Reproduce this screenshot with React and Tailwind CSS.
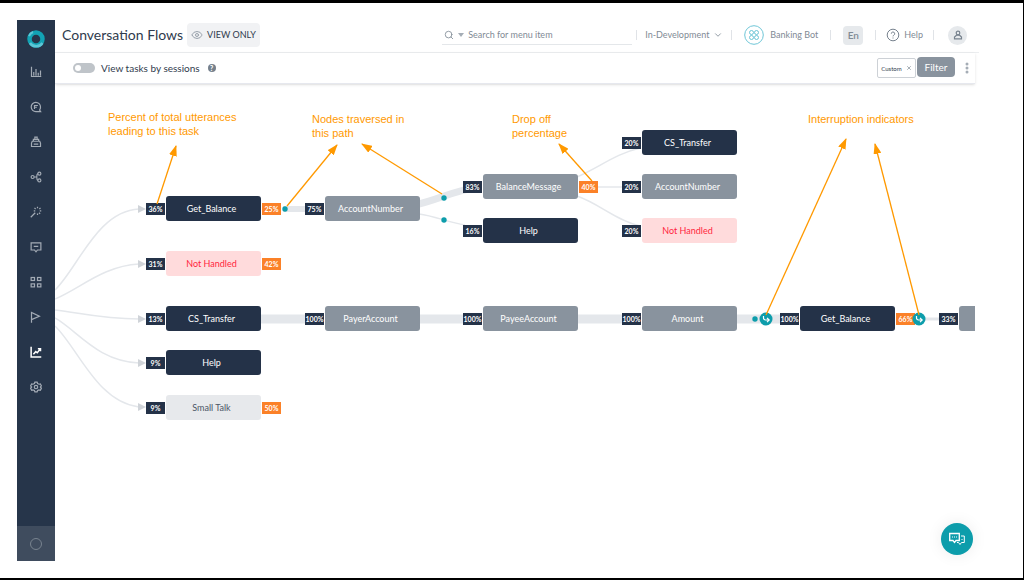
import React, { useState } from 'react';
import { Eye, Search, ChevronDown, X } from 'lucide-react';

const navItems = [
  {
    label: 'Dashboard',
    icon: <path d="M2 1v13h13M5 13V8M8 13V4M11 13V9M14 13V6" />
  },
  {
    label: 'Conversations',
    icon: <path d="M14 8a6.2 6.2 0 1 0-6 6.2h6.2l-1.4-2.2A6 6 0 0 0 14 8zM6 10.500V6h4.500M6 8.300h3.200" />
  },
  {
    label: 'Bot Tasks',
    icon: <path d="M4.500 7V4.500h7V7M6.500 4V1.500h3V4M3 7h10l1 2.500V14H2V9.500zM5 10.800h6" />
  },
  {
    label: 'Flows',
    icon: (
      <>
        <circle cx="3.500" cy="8" r="2" />
        <circle cx="12.500" cy="3.500" r="2" />
        <circle cx="12.500" cy="12.500" r="2" />
        <path d="M5.500 8h3.500M10.500 3.500C9 4 9 5.500 9 8s0 4 1.500 4.500" />
      </>
    )
  },
  {
    label: 'Training',
    icon: <path d="M1 15l6-6M10 1v2M14 2.500l-1.500 1.500M15 6.500h-2M13.500 10.500L12 9M10 12v-2M6 2.500L7.500 4M5 6.500h2" />
  },
  {
    label: 'Channels',
    icon: <path d="M1.500 2.500h13v9.500H10l-2 2.500L6 12H1.500zM5 7.200h6" />
  },
  {
    label: 'Apps',
    icon: (
      <>
        <rect x="1.500" y="2" width="4.500" height="4" />
        <rect x="10" y="2" width="4.500" height="4" />
        <rect x="1.500" y="10.500" width="4.500" height="4" />
        <rect x="10" y="10.500" width="4.500" height="4" />
      </>
    )
  },
  {
    label: 'Goals',
    icon: <path d="M2 15.500V2l10.500 5L2 11.500" />
  },
  {
    label: 'Analytics',
    active: true,
    icon: <path d="M1.500 1v13.500H15M4.500 11l3.200-3.500 2 1.500L14 3.500M10.500 3.500H14V7" />
  },
  {
    label: 'Settings',
    icon: (
      <>
        <path d="M6.500 1.500h3l.6 1.900 2 .9 1.700-.5 1.400 2.600-1.400 1.600 1.400 1.700-1.400 2.600-1.800-.5-1.900.9-.6 1.900h-3l-.6-1.900-2-.9-1.700.5L.8 9.700 2.200 8 .8 6.400l1.400-2.600 1.800.5 1.900-.9z" />
        <circle cx="8" cy="8" r="2.300" />
      </>
    )
  }
];

// x / y are the top left corner of the whole node row, entry badge included
const nodes = [
  { x: 91, y: 112, label: 'Get_Balance', type: 'task', entry: '36%', drop: '25%' },
  { x: 91, y: 167, label: 'Not Handled', type: 'failed', entry: '31%', drop: '42%' },
  { x: 91, y: 222, label: 'CS_Transfer', type: 'task', entry: '13%' },
  { x: 91, y: 266, label: 'Help', type: 'task', entry: '9%' },
  { x: 91, y: 311, label: 'Small Talk', type: 'talk', entry: '9%', drop: '50%' },
  { x: 250, y: 112, label: 'AccountNumber', type: 'node', entry: '75%' },
  { x: 408, y: 90, label: 'BalanceMessage', type: 'node', entry: '83%', drop: '40%' },
  { x: 408, y: 134, label: 'Help', type: 'task', entry: '16%' },
  { x: 567, y: 46, label: 'CS_Transfer', type: 'task', entry: '20%' },
  { x: 567, y: 90, label: 'AccountNumber', type: 'node', entry: '20%' },
  { x: 567, y: 134, label: 'Not Handled', type: 'failed', entry: '20%' },
  { x: 250, y: 222, label: 'PayerAccount', type: 'node', entry: '100%' },
  { x: 408, y: 222, label: 'PayeeAccount', type: 'node', entry: '100%' },
  { x: 567, y: 222, label: 'Amount', type: 'node', entry: '100%' },
  { x: 725, y: 222, label: 'Get_Balance', type: 'task', entry: '100%', drop: '66%' },
  { x: 884, y: 222, label: '', type: 'node', entry: '33%' }
];

const nodeStyles = {
  task: 'bg-[#243248] text-white',
  node: 'bg-[#89939e] text-white',
  failed: 'bg-[#ffdbdc] text-[#ff1f3d]',
  talk: 'bg-[#e7e9ec] text-[#4b5566]'
};

const links = [
  { d: 'M228 125H252', width: 6 },
  { d: 'M364 120C385 115 400 106 425 103', width: 7 },
  { d: 'M364 130C380 132 392 138 410 141', width: 1.5 },
  { d: 'M522 93C545 83 560 70 585 64', width: 1.5 },
  { d: 'M540 103H570', width: 1.5 },
  { d: 'M522 112C545 120 560 136 585 142', width: 1.5 },
  { d: 'M206 235H252', width: 9 },
  { d: 'M364 235H410', width: 9 },
  { d: 'M522 235H570', width: 9 },
  { d: 'M681 235H728', width: 9 },
  { d: 'M868 235H886', width: 3 }
];

const entryCurves = [
  'M0 206C23 184 42 127 84 125',
  'M0 215C26 204 48 182 84 180',
  'M0 226C26 229 46 235 84 235',
  'M0 234C23 247 42 277 84 279',
  'M0 242C23 264 42 318 84 323'
];

const arrows = [
  'M102 120L121 62',
  'M232 122L282 61',
  'M387 110L307 60',
  'M537 97L504 60',
  'M711 231L791 55',
  'M864 231L820 60'
];

const notes = [
  { x: 53, y: 26, lines: ['Percent of total utterances', 'leading to this task'] },
  { x: 257, y: 28, lines: ['Nodes traversed in', 'this path'] },
  { x: 457, y: 28, lines: ['Drop off', 'percentage'] },
  { x: 753, y: 28, lines: ['Interruption indicators'] }
];

const Sidebar = () => (
  <nav className="flex w-[38px] shrink-0 flex-col bg-[#26354a]">
    <a href="#home" aria-label="Home" className="flex h-[34px] items-center justify-center pt-1">
      <svg viewBox="0 0 20 20" className="size-5" fill="none">
        <circle cx="10" cy="10" r="6.500" stroke="#12a3b4" strokeWidth="4.500" />
        <path d="M4 14a7.500 7.500 0 0 0 12.500 0" stroke="#5cc6d6" strokeWidth="2.500" />
        <path d="M3 7a7.500 7.500 0 0 1 4-4" stroke="#5cc6d6" strokeWidth="2" />
      </svg>
    </a>
    {navItems.map(({ label, icon, active }) => (
      <a
        key={label}
        href={`#${label}`}
        aria-label={label}
        className={`flex h-[35px] items-center justify-center ${active ? 'text-white' : 'text-[#a3abb5]'}`}
      >
        <svg viewBox="0 0 16 16" className="size-3" fill="none" stroke="currentColor" strokeWidth={active ? 2 : 1.6}>
          {icon}
        </svg>
      </a>
    ))}
    <button type="button" aria-label="Switch app" className="mt-auto flex h-[35px] items-center justify-center bg-[#3f4c5e]">
      <span className="size-3 rounded-full border border-[#78838f]" />
    </button>
  </nav>
);

const Divider = () => <span className="h-2.5 w-px bg-[#e0e3e7]" />;

const Header = () => (
  <header className="flex h-[33px] items-center border-b border-[#eceef0] pr-3 pb-0.5 pl-[7px] text-[#7f8a95]">
    <h1 className="text-sm leading-5 text-[#2f3b4d]">Conversation Flows</h1>
    <span className="ml-1 flex h-6 items-center gap-1 rounded-sm bg-[#f1f2f4] px-1 text-[9px] text-[#2f3b4d]">
      <Eye className="size-3 text-[#9aa3ad]" />
      VIEW ONLY
    </span>

    <div className="ml-auto flex items-center text-[9px]">
      <label className="mr-1 flex h-5 w-[190px] items-center gap-1 border-b border-[#e4e7ea] pl-0.5">
        <Search className="size-2.5" />
        <svg viewBox="0 0 6 4" className="h-1 w-1.5" fill="#a5adb6">
          <path d="M0 0h6L3 4z" />
        </svg>
        <input
          type="text"
          aria-label="Search for menu item"
          placeholder="Search for menu item"
          className="min-w-0 flex-1 outline-none placeholder:text-[#7f8a95]"
        />
      </label>
      <Divider />
      <button type="button" className="mx-2 flex items-center gap-1">
        In-Development
        <ChevronDown className="size-2.5" />
      </button>
      <Divider />
      <a href="#bot" className="mx-3 flex items-center gap-1.5">
        <svg viewBox="0 0 20 20" className="size-5" fill="none" stroke="#5fbfd2">
          <circle cx="10" cy="10" r="9.300" strokeWidth="0.900" />
          <g strokeWidth="0.900">
            <circle cx="7.500" cy="7.500" r="2" />
            <circle cx="12.500" cy="7.500" r="2" />
            <circle cx="7.500" cy="12.500" r="2" />
            <circle cx="12.500" cy="12.500" r="2" />
          </g>
        </svg>
        Banking Bot
      </a>
      <Divider />
      <button type="button" className="mx-3 h-[19px] w-5 rounded-sm bg-[#e6e9ec] text-[10px] font-semibold">En</button>
      <Divider />
      <a href="#help" className="mx-2.5 flex items-center gap-1">
        <svg viewBox="0 0 14 14" className="size-3.5" fill="none" stroke="#77828e">
          <circle cx="7" cy="7" r="5.800" />
          <path d="M5.300 5.700a1.700 1.700 0 1 1 2.500 1.500c-.6.300-.8.600-.8 1.200M7 9.500v1" />
        </svg>
        Help
      </a>
      <Divider />
      <button type="button" aria-label="Account" className="ml-3.5 flex size-[19px] items-center justify-center rounded-full bg-[#e6e9ec]">
        <svg viewBox="0 0 10 10" className="size-2.5" fill="none" stroke="#77828e" strokeWidth="1.200">
          <circle cx="5" cy="3" r="1.800" />
          <path d="M3.500 5.200L1.500 7v1.800h7V7l-2-1.800z" />
        </svg>
      </button>
    </div>
  </header>
);

const Toolbar = () => {
  const [bySession, setBySession] = useState(false);

  return (
    <div className="mr-1 flex h-[31px] items-center border-b border-[#e6e8ee] pl-[18px] text-[10px] text-[#2f3b4d] shadow-sm">
      <input
        id="by-session"
        type="checkbox"
        checked={bySession}
        onChange={(e) => setBySession(e.target.checked)}
        className="h-2.5 w-[22px] appearance-none rounded-full bg-[#bfc4c9] before:ml-0.5 before:mt-0.5 before:block before:size-1.5 before:rounded-full before:bg-white checked:bg-[#0d9dab] checked:before:ml-3.5"
      />
      <label htmlFor="by-session" className="ml-1.5">View tasks by sessions</label>
      <button type="button" aria-label="About sessions" className="ml-2 size-2 rounded-full bg-[#75808c] text-[7px] leading-2 font-black text-white">
        ?
      </button>

      <span className="ml-auto flex h-5 w-[39px] items-center justify-center gap-1 rounded-xs border border-[#cdd1d6] text-[6px]">
        Custom
        <button type="button" aria-label="Remove Custom">
          <X className="size-1.5 text-[#8a949e]" strokeWidth={3} />
        </button>
      </span>
      <button type="button" className="mb-0.5 ml-px h-5 w-[38px] rounded-sm bg-[#89939e] text-white">Filter</button>
      <button type="button" aria-label="More options" className="mr-1.5 ml-2.5">
        <svg viewBox="0 0 4 12" className="h-3 w-1" fill="#a5adb6">
          <circle cx="2" cy="2" r="1.500" />
          <circle cx="2" cy="6" r="1.500" />
          <circle cx="2" cy="10" r="1.500" />
        </svg>
      </button>
    </div>
  );
};

const FlowNode = ({ node }) => (
  <div
    className="absolute flex items-center gap-px"
    style={{ left: node.x, top: node.y }}
  >
    <span className="h-3 w-[19px] bg-[#243248] text-center text-[7px] leading-3 font-bold text-white">{node.entry}</span>
    <button type="button" aria-label={node.label || 'Next node'} className={`h-[25px] w-[95px] rounded-[3px] pr-1 text-[9px] ${nodeStyles[node.type]}`}>
      {node.label}
    </button>
    {node.drop && (
      <span className="h-3 w-[19px] bg-[#fb8128] text-center text-[7px] leading-3 font-bold text-white">{node.drop}</span>
    )}
  </div>
);

const Interruption = ({ x, y }) => (
  <g transform={`translate(${x} ${y})`} fill="none">
    <circle r="6.500" fill="#0d9dab" />
    <path d="M-2.500 -3V-1a2 2 0 0 0 2 2H3M1 -1.200L3.200 1 1 3.200" stroke="#fff" strokeWidth="1.200" />
  </g>
);

const FlowCanvas = () => (
  <div className="relative mr-1 min-h-[400px] flex-1 overflow-hidden">
    <svg className="absolute inset-0 size-full" fill="none" stroke="#e4e7eb">
      {entryCurves.map((d) => <path key={d} d={d} strokeWidth="1.500" />)}
      {[125, 180, 235, 279, 323].map((y) => (
        <path key={y} d={`M83 ${y - 4}l8 4l-8 4z`} fill="#d0d4d9" stroke="none" />
      ))}
      {links.map(({ d, width }) => <path key={d} d={d} strokeWidth={width} />)}
    </svg>

    {nodes.map((node) => <FlowNode key={`${node.x}-${node.y}`} node={node} />)}

    <svg className="pointer-events-none absolute inset-0 size-full">
      <defs>
        <marker id="head" markerUnits="userSpaceOnUse" markerWidth="11" markerHeight="8" refX="10" refY="4" orient="auto">
          <path d="M0 0L11 4L0 8z" fill="#ff9900" />
        </marker>
      </defs>
      <g fill="#0d9dab">
        <circle cx="230" cy="125" r="2.700" />
        <circle cx="389" cy="114" r="2.700" />
        <circle cx="389" cy="136" r="2.700" />
        <circle cx="700" cy="235" r="2.700" />
      </g>
      <Interruption x={711} y={235} />
      <Interruption x={864} y={235} />
      {arrows.map((d) => (
        <path key={d} d={d} stroke="#ff9900" strokeWidth="1.300" markerEnd="url(#head)" />
      ))}
    </svg>

    {notes.map(({ x, y, lines }) => (
      <p
        key={lines[0]}
        className="absolute font-['Liberation_Sans',Arial,sans-serif] text-[11px] leading-[14px] whitespace-nowrap text-[#ff9900]"
        style={{ left: x, top: y }}
      >
        {lines.map((line) => <span key={line} className="block">{line}</span>)}
      </p>
    ))}
  </div>
);

const App = () => (
  <div className="flex min-h-screen border-t-[3px] border-r border-b-2 border-black bg-white py-[17px] pr-11 pl-[17px] font-[Lato,sans-serif]">
    <Sidebar />
    <main className="relative flex min-w-0 flex-1 flex-col">
      <Header />
      <Toolbar />
      <FlowCanvas />
      <button
        type="button"
        aria-label="Chat with us"
        className="absolute right-1.5 bottom-1.5 flex size-8 items-center justify-center rounded-full bg-[#0d9dab] shadow-[0_0_16px_rgba(0,0,0,0.08)]"
      >
        <svg viewBox="0 0 16 14" className="h-3.5 w-4" fill="none" stroke="#fff">
          <path d="M.7 1.500h9.600v7H7L5.500 10.500 4 8.500H.7z" strokeWidth="1.300" />
          <path d="M3 5h1M5 5h1M7 5h1" strokeWidth="1.200" />
          <path d="M12 4h3.300v6.500H12.500L11 12.500l-1.500-2H8M12.500 7.500h1" />
        </svg>
      </button>
    </main>
  </div>
);

export default App;
